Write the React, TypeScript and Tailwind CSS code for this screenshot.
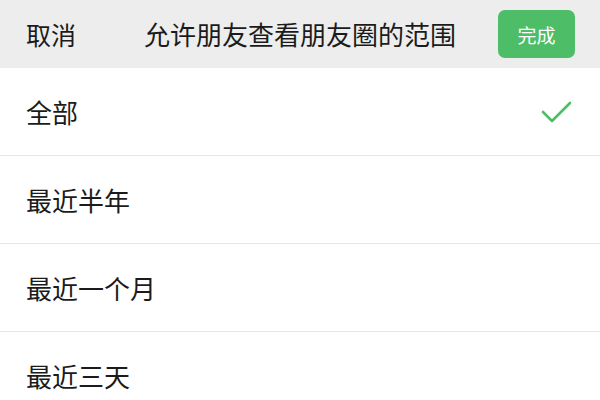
import React, { useState } from 'react';

const options = ['全部', '最近半年', '最近一个月', '最近三天'];

export default function App() {
  const [selected, setSelected] = useState(0);

  return (
    <div
      className="w-[600px] h-[400px] overflow-hidden bg-white text-[#1b1b1b]"
      style={{ fontFamily: '"Noto Sans CJK SC", "Noto Sans", sans-serif' }}
    >
      {/* header */}
      <div className="relative h-[68px] bg-[#ededed] flex items-center justify-between pl-[26px] pr-[25px]">
        <span className="text-[25px] leading-none">取消</span>
        <span className="absolute left-1/2 -translate-x-1/2 text-[26px] leading-none whitespace-nowrap">
          允许朋友查看朋友圈的范围
        </span>
        <button className="w-[77px] h-[48px] rounded-[7px] bg-[#4dbd68] text-white text-[19px] leading-none">
          完成
        </button>
      </div>

      {/* options */}
      <div className="flex flex-col">
        {options.map((label, i) => (
          <div
            key={label}
            onClick={() => setSelected(i)}
            className="h-[88px] flex items-center justify-between pl-[26px] pr-[28px] border-b border-[#e6e6e6]"
          >
            <span className="text-[26px] leading-none">{label}</span>
            {selected === i && (
              <svg width="31" height="24" viewBox="0 0 31 24" fill="none">
                <path
                  d="M2 12 L11 21 L29 3"
                  stroke="#4dbd68"
                  strokeWidth="2.6"
                  strokeLinecap="round"
                  strokeLinejoin="round"
                />
              </svg>
            )}
          </div>
        ))}
      </div>
    </div>
  );
}
